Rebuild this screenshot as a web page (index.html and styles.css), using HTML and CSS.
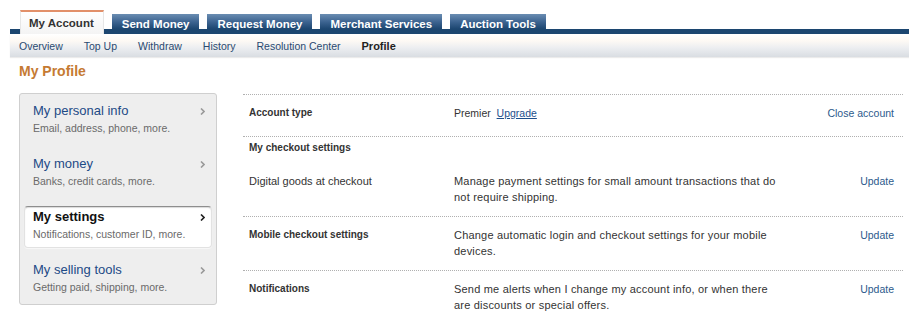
FILE: index.html
```html
<!DOCTYPE html>
<html>
<head>
<meta charset="utf-8">
<link rel="stylesheet" href="styles.css">
</head>
<body>
<div class="tabbar">
  <a class="tab tab-active">My Account</a>
  <a class="tab">Send Money</a>
  <a class="tab">Request Money</a>
  <a class="tab">Merchant Services</a>
  <a class="tab">Auction Tools</a>
</div>
<div class="subnav">
  <a class="sub">Overview</a>
  <a class="sub">Top Up</a>
  <a class="sub">Withdraw</a>
  <a class="sub">History</a>
  <a class="sub">Resolution Center</a>
  <a class="sub sub-active">Profile</a>
</div>
<h1 class="page-title">My Profile</h1>
<div class="main">
  <div class="side">
    <div class="side-item">
      <div class="side-head"><span class="side-title">My personal info</span><svg class="chev" width="5" height="7" viewBox="0 0 5 7"><path d="M1 0.5 L4 3.5 L1 6.5" fill="none" stroke="currentColor" stroke-width="1.6"/></svg></div>
      <div class="side-sub">Email, address, phone, more.</div>
    </div>
    <div class="side-item">
      <div class="side-head"><span class="side-title">My money</span><svg class="chev" width="5" height="7" viewBox="0 0 5 7"><path d="M1 0.5 L4 3.5 L1 6.5" fill="none" stroke="currentColor" stroke-width="1.6"/></svg></div>
      <div class="side-sub">Banks, credit cards, more.</div>
    </div>
    <div class="side-item side-active">
      <div class="side-head"><span class="side-title">My settings</span><svg class="chev" width="5" height="7" viewBox="0 0 5 7"><path d="M1 0.5 L4 3.5 L1 6.5" fill="none" stroke="currentColor" stroke-width="1.6"/></svg></div>
      <div class="side-sub">Notifications, customer ID, more.</div>
    </div>
    <div class="side-item">
      <div class="side-head"><span class="side-title">My selling tools</span><svg class="chev" width="5" height="7" viewBox="0 0 5 7"><path d="M1 0.5 L4 3.5 L1 6.5" fill="none" stroke="currentColor" stroke-width="1.6"/></svg></div>
      <div class="side-sub">Getting paid, shipping, more.</div>
    </div>
  </div>
  <div class="table">
    <div class="row row-account">
      <div class="label bold">Account type</div>
      <div class="desc">Premier&nbsp;&nbsp;<a class="upgrade">Upgrade</a></div>
      <div class="action"><a class="act">Close account</a></div>
    </div>
    <div class="row row-checkout">
      <div class="section-head bold">My checkout settings</div>
      <div class="label">Digital goods at checkout</div>
      <div class="desc">Manage payment settings for small amount transactions that do<br>not require shipping.</div>
      <div class="action"><a class="act">Update</a></div>
    </div>
    <div class="row">
      <div class="label bold">Mobile checkout settings</div>
      <div class="desc">Change automatic login and checkout settings for your mobile<br>devices.</div>
      <div class="action"><a class="act">Update</a></div>
    </div>
    <div class="row">
      <div class="label bold">Notifications</div>
      <div class="desc">Send me alerts when I change my account info, or when there<br>are discounts or special offers.</div>
      <div class="action"><a class="act">Update</a></div>
    </div>
  </div>
</div>
</body>
</html>
```
FILE: styles.css
```css
* { box-sizing: border-box; }
body {
  margin: 0;
  font-family: "Liberation Sans", Arial, sans-serif;
  color: #333;
  background: #fff;
  overflow: hidden;
}
a { text-decoration: none; cursor: pointer; }

.tabbar {
  margin: 10px 0 0 10px;
  padding-left: 10px;
  height: 24px;
  display: flex;
  gap: 8px;
  background: linear-gradient(to bottom, transparent 19px, #1c4670 19px);
}
.tab {
  margin-top: 4px;
  height: 20px;
  padding: 0 10px;
  line-height: 20px;
  font-size: 11.5px;
  font-weight: bold;
  color: #fff;
  background: linear-gradient(to bottom, #6a8db2 0px, #3c6390 8px, #1c4670 15px);
}
.tab-active {
  margin-top: 0;
  height: 24px;
  line-height: 23px;
  color: #333;
  border-top: 2px solid #e2906a;
  border-left: 1px solid #e6e6e6;
  border-right: 1px solid #e6e6e6;
  background: linear-gradient(to bottom, #ffffff, #f4f4f4);
  padding: 0 9px 0 8px;
}

.subnav {
  margin-left: 10px;
  height: 23px;
  padding-left: 9px;
  display: flex;
  gap: 21px;
  align-items: center;
  background: linear-gradient(to bottom, #ffffff 0%, #fdf9f4 30%, #eceef1 60%, #d9dde2 100%);
  box-shadow: 0 1px 1px rgba(0,0,0,0.08);
}
.sub {
  font-size: 10.5px;
  color: #2a4a70;
  line-height: 16px;
}
.sub-active {
  font-weight: bold;
  color: #222;
  font-size: 11px;
}

.page-title {
  margin: 6px 0 0 19px;
  font-size: 14px;
  line-height: 16px;
  font-weight: bold;
  color: #c57a32;
}

.main {
  display: flex;
  gap: 26px;
  margin: 14px 6px 0 19px;
  align-items: flex-start;
}
.side {
  width: 198px;
  flex: none;
  background: #eeeeee;
  border: 1px solid #cfcfcf;
  border-radius: 3px;
  padding: 6px 4px 3px 4px;
  display: flex;
  flex-direction: column;
  gap: 11px;
}
.side-item {
  height: 42px;
  padding: 2px 6px 0 8px;
  border: 1px solid transparent;
  border-radius: 4px;
}
.side-head {
  display: flex;
  justify-content: space-between;
  align-items: center;
  height: 16px;
}
.side-title {
  font-size: 13px;
  color: #1d4a86;
  line-height: 16px;
}
.chev { color: #9a9a9a; }
.side-sub {
  margin-top: 2px;
  font-size: 10.5px;
  line-height: 14px;
  color: #6a6a6a;
}
.side-active {
  background: #fff;
  border-color: #e2e2e2;
  border-top-color: #8e8e8e;
  box-shadow: inset 0 1px 1px rgba(0,0,0,0.15), 0 1px 1px rgba(255,255,255,0.6);
}
.side-active .side-title { color: #111; font-weight: bold; }
.side-active .chev { color: #222; }

.table {
  flex: 1;
  margin-top: 1px;
}
.row {
  display: grid;
  grid-template-columns: 205px 1fr auto;
  padding: 10px 9px 11px 6px;
  border-top: 1px dotted #b0b0b0;
  line-height: 16px;
  font-size: 11px;
}
.row-account { padding-bottom: 15px; }
.row-checkout { padding-top: 3px; row-gap: 17px; }
.section-head { grid-column: 1 / -1; }
.bold { font-weight: bold; font-size: 10px; }
.label { color: #333; }
.desc { color: #333; letter-spacing: 0.2px; }
.row-account .desc { font-size: 10.5px; letter-spacing: 0; }
.action { text-align: right; font-size: 10.5px; }
.upgrade { color: #1d4f8c; text-decoration: underline; }
.act { color: #2c5a8c; }
```
